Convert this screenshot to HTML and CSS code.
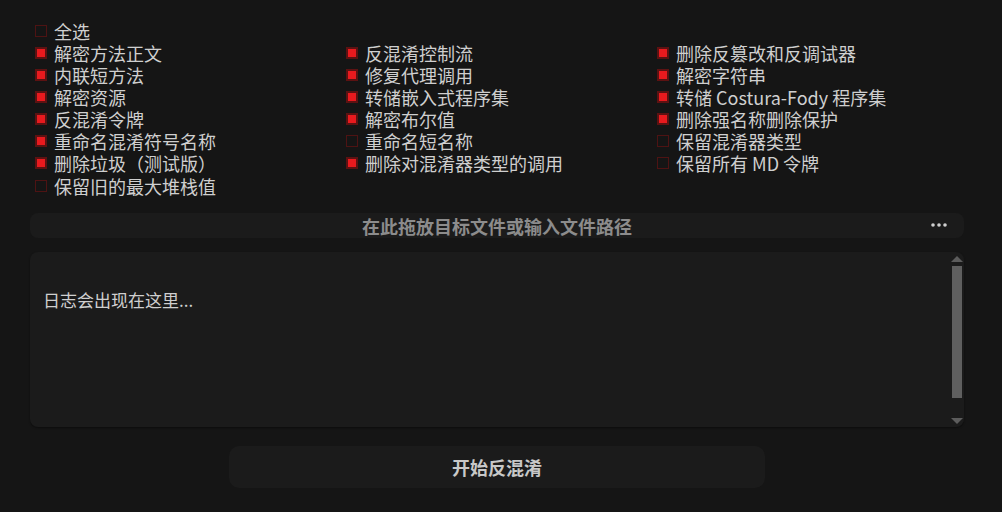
FILE: index.html
```html
<!DOCTYPE html>
<html lang="zh-CN">
  <head>
    <meta charset="UTF-8" />
    <meta name="viewport" content="width=device-width, initial-scale=1.0" />
    <title>反混淆</title>
    <link rel="stylesheet" href="styles.css">
  </head>
  <body>
    <div class="options">
      <label class="opt full"><span class="box"></span>全选</label>
      <label class="opt"><span class="box on"></span>解密方法正文</label>
      <label class="opt"><span class="box on"></span>反混淆控制流</label>
      <label class="opt"><span class="box on"></span>删除反篡改和反调试器</label>
      <label class="opt"><span class="box on"></span>内联短方法</label>
      <label class="opt"><span class="box on"></span>修复代理调用</label>
      <label class="opt"><span class="box on"></span>解密字符串</label>
      <label class="opt"><span class="box on"></span>解密资源</label>
      <label class="opt"><span class="box on"></span>转储嵌入式程序集</label>
      <label class="opt"><span class="box on"></span>转储 Costura-Fody 程序集</label>
      <label class="opt"><span class="box on"></span>反混淆令牌</label>
      <label class="opt"><span class="box on"></span>解密布尔值</label>
      <label class="opt"><span class="box on"></span>删除强名称删除保护</label>
      <label class="opt"><span class="box on"></span>重命名混淆符号名称</label>
      <label class="opt"><span class="box"></span>重命名短名称</label>
      <label class="opt"><span class="box"></span>保留混淆器类型</label>
      <label class="opt"><span class="box on"></span>删除垃圾（测试版）</label>
      <label class="opt"><span class="box on"></span>删除对混淆器类型的调用</label>
      <label class="opt"><span class="box"></span>保留所有 MD 令牌</label>
      <label class="opt full last"><span class="box"></span>保留旧的最大堆栈值</label>
    </div>

    <div class="drop">
      <span class="drop-text">在此拖放目标文件或输入文件路径</span>
      <svg class="more" width="16" height="4" viewBox="0 0 16 4">
        <circle cx="2" cy="2" r="1.8" fill="#cfcfcf" />
        <circle cx="8" cy="2" r="1.8" fill="#cfcfcf" />
        <circle cx="14" cy="2" r="1.8" fill="#cfcfcf" />
      </svg>
    </div>

    <div class="log">
      <div class="log-text">日志会出现在这里...</div>
      <div class="scroll">
        <span class="arrow up"></span>
        <span class="thumb"></span>
        <span class="arrow down"></span>
      </div>
    </div>

    <div class="actions">
      <button class="start">开始反混淆</button>
    </div>
  </body>
</html>
```

FILE: styles.css
```css
/* Base */
body {
  margin: 0;
  padding: 20px 38px 0 30px;
  background: #151515;
  color: #cfcfcf;
  font-family: "Microsoft YaHei", "Noto Sans CJK SC", "Noto Sans", sans-serif;
  font-size: 18px;
  height: 512px;
  box-sizing: border-box;
  overflow: hidden;
}

/* Option grid */
.options {
  display: grid;
  grid-template-columns: 311px 311px 1fr;
  grid-auto-rows: 22px;
  padding-left: 5px;
}
.opt {
  display: flex;
  align-items: center;
  gap: 7px;
  white-space: nowrap;
  line-height: 22px;
}
.opt.full {
  grid-column: 1 / -1;
}
.opt.last {
  margin-top: 2px;
}
.box {
  width: 12px;
  height: 12px;
  box-sizing: border-box;
  border: 1px solid #4e1313;
  flex: none;
}
.box.on {
  background: #e81a1e;
  border: 2px solid #5c1212;
}

/* Drop bar */
.drop {
  position: relative;
  height: 25px;
  margin-top: 17px;
  background: #1b1b1b;
  border-radius: 8px;
  display: flex;
  align-items: center;
  justify-content: center;
}
.drop-text {
  font-size: 18px;
  font-weight: bold;
  color: #8c8c8c;
}
.more {
  position: absolute;
  right: 17px;
  top: 10px;
}

/* Log area */
.log {
  margin-top: 14px;
  height: 175px;
  background: #1b1b1b;
  border-radius: 8px;
  display: flex;
  box-shadow: 0 1px 2px rgba(0, 0, 0, 0.4);
}
.log-text {
  flex: 1;
  padding: 35px 0 0 13px;
  font-size: 17px;
  color: #cfcfcf;
}
.scroll {
  width: 10px;
  margin-right: 2px;
  padding-top: 4px;
  display: flex;
  flex-direction: column;
  align-items: center;
}
.arrow {
  width: 0;
  height: 0;
  border-left: 6px solid transparent;
  border-right: 6px solid transparent;
}
.arrow.up {
  border-bottom: 6px solid #5c5c5c;
}
.arrow.down {
  border-top: 6px solid #5c5c5c;
  margin-top: 20px;
}
.thumb {
  width: 10px;
  height: 132px;
  margin-top: 4px;
  background: #5f5f5f;
}

/* Bottom button */
.actions {
  display: flex;
  justify-content: center;
  margin-top: 19px;
}
.start {
  width: 536px;
  height: 42px;
  border: none;
  border-radius: 10px;
  background: #1b1b1b;
  color: #c8c8c8;
  font-family: inherit;
  font-size: 18px;
  font-weight: bold;
}
```
